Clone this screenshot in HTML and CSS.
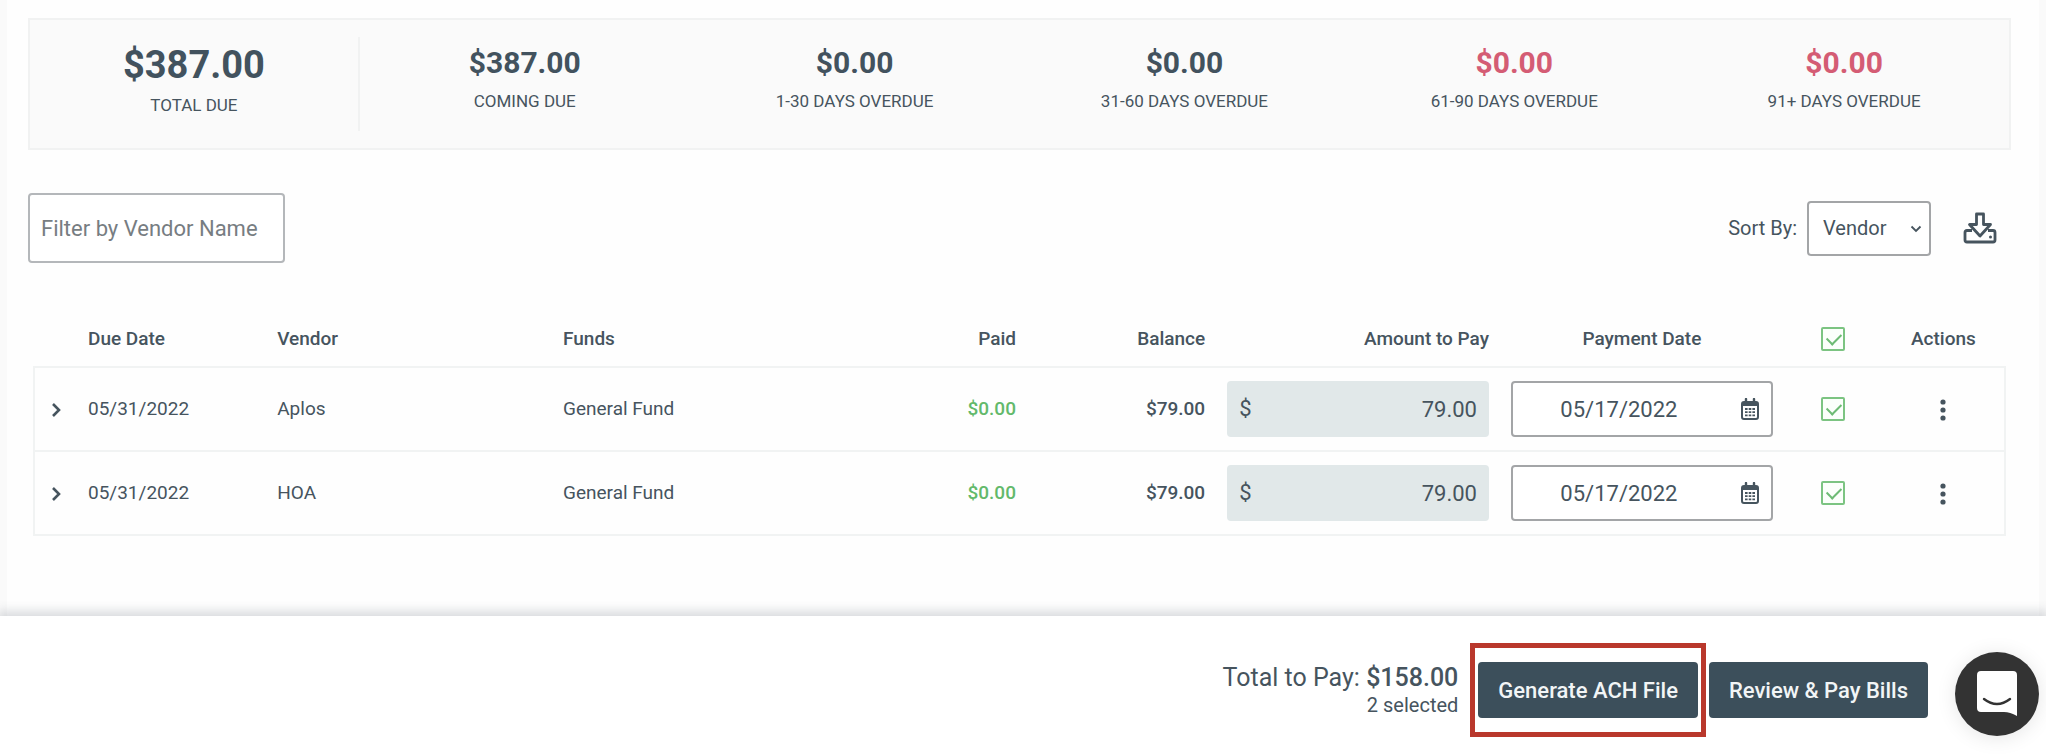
FILE: index.html
```html
<!DOCTYPE html>
<html lang="en">

<head>
    <meta charset="UTF-8">
    <meta name="viewport" content="width=device-width, initial-scale=1.0">
    <title>Pay Bills</title>
    <link rel="stylesheet" href="styles.css">
</head>

<body>
    <!-- shared icons -->
    <svg class="icon-defs" aria-hidden="true">
        <symbol id="icon-chevron-right" viewBox="0 0 10 16">
            <path d="M2 2l6 6-6 6" fill="none" stroke="currentColor" stroke-width="2.6" />
        </symbol>
        <symbol id="icon-calendar" viewBox="0 0 18 22">
            <path d="M5 1v4M13 1v4" stroke="currentColor" stroke-width="2.4" stroke-linecap="round" />
            <rect x="1" y="4" width="16" height="17" rx="2" fill="none" stroke="currentColor" stroke-width="2" />
            <path d="M1 4h16v4H1z" fill="currentColor" />
            <path d="M4 11h2.600M7.700 11h2.600M11.400 11h2.600M4 14.200h2.600M7.700 14.200h2.600M11.400 14.200h2.600M4 17.400h2.600M7.700 17.400h2.600M11.400 17.400h2.600" stroke="currentColor" stroke-width="1.800" />
        </symbol>
        <symbol id="icon-dots" viewBox="0 0 6 22">
            <circle cx="3" cy="3" r="2.600" fill="currentColor" />
            <circle cx="3" cy="11" r="2.600" fill="currentColor" />
            <circle cx="3" cy="19" r="2.600" fill="currentColor" />
        </symbol>
    </svg>

    <main class="panel">
        <section class="summary">
            <div class="summary-item total">
                <strong>$387.00</strong>
                <span>TOTAL DUE</span>
            </div>
            <div class="summary-item">
                <strong>$387.00</strong>
                <span>COMING DUE</span>
            </div>
            <div class="summary-item">
                <strong>$0.00</strong>
                <span>1-30 DAYS OVERDUE</span>
            </div>
            <div class="summary-item">
                <strong>$0.00</strong>
                <span>31-60 DAYS OVERDUE</span>
            </div>
            <div class="summary-item late">
                <strong>$0.00</strong>
                <span>61-90 DAYS OVERDUE</span>
            </div>
            <div class="summary-item late">
                <strong>$0.00</strong>
                <span>91+ DAYS OVERDUE</span>
            </div>
        </section>

        <div class="toolbar">
            <input type="text" class="filter" placeholder="Filter by Vendor Name" aria-label="Filter by Vendor Name">
            <div class="sort">
                <label for="sort-by">Sort By:</label>
                <div class="select-box">
                    <select id="sort-by">
                        <option>Vendor</option>
                        <option>Due Date</option>
                    </select>
                    <svg class="select-arrow" viewBox="0 0 12 8" aria-hidden="true">
                        <path d="M1.500 1.500L6 6l4.500-4.500" fill="none" stroke="currentColor" stroke-width="1.800" />
                    </svg>
                </div>
                <button class="icon-btn download-btn" aria-label="Download">
                    <svg viewBox="0 0 34 32" aria-hidden="true">
                        <g fill="none" stroke="currentColor" stroke-width="2.800" stroke-linejoin="round">
                            <path d="M9 18.500H4Q2 18.500 2 20.500V28q0 2 2 2h26q2 0 2-2v-7.500q0-2-2-2H25" />
                            <path d="M13.500 2h7v10.500H27.500L17 24 6.500 12.500h7z" />
                        </g>
                        <circle cx="27.500" cy="25" r="1.500" fill="currentColor" />
                    </svg>
                </button>
            </div>
        </div>

        <table class="bills">
            <colgroup>
                <col class="col-expand">
                <col class="col-small">
                <col class="col-wide">
                <col class="col-wide">
                <col class="col-small">
                <col class="col-small">
                <col class="col-input">
                <col class="col-input">
                <col class="col-check">
                <col class="col-actions">
            </colgroup>
            <thead>
                <tr>
                    <th></th>
                    <th>Due Date</th>
                    <th>Vendor</th>
                    <th>Funds</th>
                    <th class="right">Paid</th>
                    <th class="right">Balance</th>
                    <th class="right">Amount to Pay</th>
                    <th class="center">Payment Date</th>
                    <th class="center"><input type="checkbox" class="check" aria-label="Select all" checked></th>
                    <th class="center">Actions</th>
                </tr>
            </thead>
            <tbody>
                <tr>
                    <td class="center"><button class="icon-btn expand-btn" aria-label="Expand Aplos"><svg><use href="#icon-chevron-right" /></svg></button></td>
                    <td>05/31/2022</td>
                    <td>Aplos</td>
                    <td>General Fund</td>
                    <td class="right paid">$0.00</td>
                    <td class="right balance">$79.00</td>
                    <td>
                        <div class="amount">
                            <span>$</span>
                            <input type="text" value="79.00" aria-label="Amount to pay Aplos">
                        </div>
                    </td>
                    <td>
                        <div class="date">
                            <input type="text" value="05/17/2022" aria-label="Payment date Aplos">
                            <svg><use href="#icon-calendar" /></svg>
                        </div>
                    </td>
                    <td class="center"><input type="checkbox" class="check" aria-label="Select Aplos" checked></td>
                    <td class="center"><button class="icon-btn dots-btn" aria-label="Actions for Aplos"><svg><use href="#icon-dots" /></svg></button></td>
                </tr>
                <tr>
                    <td class="center"><button class="icon-btn expand-btn" aria-label="Expand HOA"><svg><use href="#icon-chevron-right" /></svg></button></td>
                    <td>05/31/2022</td>
                    <td>HOA</td>
                    <td>General Fund</td>
                    <td class="right paid">$0.00</td>
                    <td class="right balance">$79.00</td>
                    <td>
                        <div class="amount">
                            <span>$</span>
                            <input type="text" value="79.00" aria-label="Amount to pay HOA">
                        </div>
                    </td>
                    <td>
                        <div class="date">
                            <input type="text" value="05/17/2022" aria-label="Payment date HOA">
                            <svg><use href="#icon-calendar" /></svg>
                        </div>
                    </td>
                    <td class="center"><input type="checkbox" class="check" aria-label="Select HOA" checked></td>
                    <td class="center"><button class="icon-btn dots-btn" aria-label="Actions for HOA"><svg><use href="#icon-dots" /></svg></button></td>
                </tr>
            </tbody>
        </table>
    </main>

    <footer class="pay-bar">
        <div class="pay-total">
            <div class="pay-sum">Total to Pay: <strong>$158.00</strong></div>
            <div class="pay-count">2 selected</div>
        </div>
        <div class="highlight">
            <button class="btn">Generate ACH File</button>
        </div>
        <button class="btn">Review &amp; Pay Bills</button>
        <button class="chat-btn" aria-label="Open chat">
            <svg viewBox="0 0 40 46" aria-hidden="true">
                <path d="M4 0h32q4 0 4 4v41q-7-4-13-4H4q-4 0-4-4V4q0-4 4-4z" fill="#fff" />
                <path d="M7 28q13 10 26 0" fill="none" stroke="#333" stroke-width="2.400" stroke-linecap="round" />
            </svg>
        </button>
    </footer>
</body>

</html>
```
FILE: styles.css
```css
* {
    box-sizing: border-box;
}

body {
    margin: 0;
    min-height: 100vh;
    display: flex;
    flex-direction: column;
    background-color: #fafafa;
    color: #46545e;
    font-family: Roboto, "Liberation Sans", sans-serif;
    font-size: 20px;
    line-height: 24px;
}

input,
select,
button {
    font-family: inherit;
    color: inherit;
}

.icon-defs {
    display: none;
}

.panel {
    flex: 1;
    margin: 0 7px;
    padding: 18px 28px 0 21px;
    background-color: #fefefe;
}

/* Totals */
.summary {
    display: grid;
    grid-template-columns: repeat(6, 1fr);
    height: 132px;
    padding: 17px 0;
    border: 2px solid #f1f2f2;
    background-color: #fafafa;
}

.summary-item {
    display: flex;
    flex-direction: column;
    align-items: center;
    gap: 8px;
    padding-top: 8px;
    font-size: 17px;
}

.summary-item strong {
    font-size: 30px;
    line-height: 36px;
    font-weight: 700;
    color: #42525e;
}

.summary-item.total {
    border-right: 2px solid #f1f2f2;
}

.summary-item.total strong {
    font-size: 38px;
    line-height: 40px;
}

.summary-item.late strong {
    color: #d45c74;
}

/* Filter and sort */
.toolbar {
    display: flex;
    justify-content: space-between;
    align-items: center;
    margin-top: 43px;
}

.filter {
    width: 257px;
    height: 70px;
    padding: 0 11px;
    border: 2px solid #b4b7ba;
    border-radius: 4px;
    background-color: #fff;
    font-size: 22px;
}

.filter::placeholder {
    color: #777d82;
    opacity: 1;
}

.sort {
    display: flex;
    align-items: center;
    padding-right: 14px;
}

.select-box {
    position: relative;
    margin: 0 32px 0 10px;
}

.select-box select {
    appearance: none;
    width: 124px;
    height: 55px;
    padding: 0 14px;
    border: 2px solid #a3a5a7;
    border-radius: 4px;
    background-color: #fff;
    font-size: 20px;
}

.select-arrow {
    position: absolute;
    right: 9px;
    top: 24px;
    width: 12px;
    height: 8px;
    pointer-events: none;
}

.icon-btn {
    display: inline-flex;
    padding: 0;
    border: none;
    background: none;
    vertical-align: middle;
    cursor: pointer;
}

.download-btn svg {
    width: 34px;
    height: 32px;
}

/* Bills table */
.bills {
    width: calc(100% - 10px);
    margin: 49px 5px 0;
    table-layout: fixed;
    border-collapse: collapse;
    font-size: 19px;
}

.col-expand {
    width: 43px;
}

.col-small {
    width: 9.6%;
}

.col-wide {
    width: 14.5%;
}

.col-input {
    width: 14.4%;
}

.col-check {
    width: 98px;
}

.bills th {
    height: 55px;
    padding: 0 11px;
    text-align: left;
    font-weight: 500;
    white-space: nowrap;
}

.bills td {
    height: 84px;
    padding: 0 11px;
    white-space: nowrap;
}

.bills tbody tr {
    border: 2px solid #f1f3f3;
}

.bills .right {
    text-align: right;
}

.bills .center {
    padding: 0;
    text-align: center;
}

.bills .paid {
    color: #62b96b;
    font-weight: 500;
}

.bills .balance {
    font-weight: 500;
}

.expand-btn svg {
    width: 10px;
    height: 16px;
}

.dots-btn svg {
    width: 6px;
    height: 22px;
}

.amount,
.date {
    display: flex;
    align-items: center;
    height: 56px;
    padding: 0 12px;
    border-radius: 4px;
    font-size: 22px;
}

.amount {
    background-color: #e1e8e9;
}

.date {
    border: 2px solid #a3a5a7;
    background-color: #fff;
}

.amount input,
.date input {
    flex: 1;
    min-width: 0;
    padding: 0;
    border: none;
    background: none;
    font-size: 22px;
}

.amount input {
    text-align: right;
}

.date input {
    padding-right: 28px;
    text-align: center;
}

.date svg {
    width: 18px;
    height: 22px;
}

.check {
    appearance: none;
    position: relative;
    width: 24px;
    height: 24px;
    margin: 0;
    border: 2px solid #7cc482;
    border-radius: 2px;
    background-color: #fbfffb;
    vertical-align: text-bottom;
}

/* tick */
.check:checked::before {
    content: "";
    position: absolute;
    left: 4px;
    top: 4px;
    width: 12px;
    height: 7px;
    border-left: 2px solid #6dbb74;
    border-bottom: 2px solid #6dbb74;
    transform: rotate(-45deg);
}

/* Bottom bar */
.pay-bar {
    display: flex;
    align-items: center;
    justify-content: flex-end;
    height: 138px;
    padding: 10px 7px 0 0;
    background-color: #fff;
    box-shadow: 0 -3px 10px 2px rgba(70, 80, 95, 0.2);
}

.pay-total {
    text-align: right;
    margin-right: 12px;
}

.pay-sum {
    font-size: 25px;
    line-height: 30px;
}

.pay-sum strong {
    font-weight: 500;
}

.btn {
    height: 56px;
    padding: 0 20px;
    border: none;
    border-radius: 4px;
    background-color: #3c4f5b;
    color: #f2f5f6;
    font-size: 22px;
    font-weight: 500;
    cursor: pointer;
}

.highlight {
    margin-right: 3px;
    padding: 14px 3px;
    border: 5px solid #b9382c;
}

.chat-btn {
    display: flex;
    align-items: center;
    justify-content: center;
    width: 84px;
    height: 84px;
    margin: 8px 0 0 27px;
    border: none;
    border-radius: 50%;
    background-color: #333;
    box-shadow: 0 2px 20px rgba(0, 0, 0, 0.1);
    cursor: pointer;
}

.chat-btn svg {
    width: 40px;
    height: 46px;
}
```
